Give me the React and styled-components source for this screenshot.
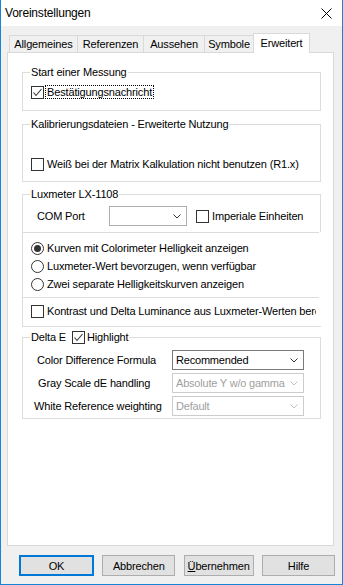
import React from 'react';
import styled, { createGlobalStyle } from 'styled-components';

const GlobalStyle = createGlobalStyle`
  html, body {
    margin: 0;
    padding: 0;
    background: #ffffff;
  }
  body {
    font-family: "Liberation Sans", Arial, sans-serif;
    font-size: 11px;
    letter-spacing: -0.15px;
    color: #000000;
  }
  * {
    box-sizing: border-box;
  }
`;

const Window = styled.div`
  width: 343px;
  height: 585px;
  border: 1px solid #1883d7;
  border-top: none;
  display: flex;
  flex-direction: column;
  background: #ffffff;
`;

const TitleBar = styled.div`
  height: 26px;
  display: flex;
  align-items: center;
  justify-content: space-between;
  padding: 0 10px 0 4px;
  background: #ffffff;
`;

const Title = styled.div`
  font-size: 12px;
  letter-spacing: -0.2px;
`;

const Body = styled.div`
  flex: 1;
  display: flex;
  flex-direction: column;
  background: #f0f0f0;
`;

const TabArea = styled.div`
  flex: 1;
  display: flex;
  flex-direction: column;
  margin: 7px 8px 0 6px;
`;

const TabStrip = styled.div`
  display: flex;
  align-items: flex-end;
  height: 20px;
  margin-bottom: -1px;
  padding-left: 2px;
  position: relative;
  z-index: 1;
`;

const Tab = styled.div`
  width: ${p => p.$w}px;
  height: ${p => (p.$active ? 20 : 17)}px;
  margin-bottom: ${p => (p.$active ? 0 : 1)}px;
  margin-right: -1px;
  border: 1px solid #d9d9d9;
  border-bottom: none;
  background: ${p => (p.$active ? '#ffffff' : '#f0f0f0')};
  display: flex;
  align-items: center;
  justify-content: center;
  padding-bottom: ${p => (p.$active ? 2 : 0)}px;
  position: relative;
  z-index: ${p => (p.$active ? 2 : 1)};
`;

const Panel = styled.div`
  flex: 1;
  background: #ffffff;
  border: 1px solid #d9d9d9;
  padding: 12px 12px 0 14px;
  display: flex;
  flex-direction: column;
  min-height: 0;
`;

const Group = styled.fieldset`
  margin: ${p => p.$mt || 0}px 0 0 0;
  padding: ${p => p.$pt}px 0 ${p => p.$pb}px 0;
  border: 1px solid #dcdcdc;
  min-width: 0;
`;

const Legend = styled.legend`
  margin-left: 7px;
  padding: 0 1px;
  line-height: 14px;
`;

const LegendInner = styled.span`
  display: flex;
  align-items: center;
  height: 14px;
`;

const Row = styled.div`
  display: flex;
  align-items: center;
  height: ${p => p.$h || 16}px;
  padding-left: ${p => (p.$indent !== undefined ? p.$indent : 8)}px;
  margin-top: ${p => p.$mt || 0}px;
  margin-right: ${p => p.$mr || 0}px;
  overflow: hidden;
  white-space: nowrap;
`;

const Box = styled.span`
  width: 13px;
  height: 13px;
  flex-shrink: 0;
  border: 1px solid #333333;
  background: #ffffff;
  display: flex;
  align-items: center;
  justify-content: center;
  margin-left: ${p => p.$ml || 0}px;
`;

const Radio = styled.span`
  width: 13px;
  height: 13px;
  flex-shrink: 0;
  border: 1px solid #333333;
  border-radius: 50%;
  background: #ffffff;
  display: flex;
  align-items: center;
  justify-content: center;

  &::after {
    content: '';
    display: ${p => (p.$on ? 'block' : 'none')};
    width: 7px;
    height: 7px;
    border-radius: 50%;
    background: #333333;
  }
`;

const Caption = styled.span`
  margin-left: 1px;
  padding: 0 1px;
  border: 1px dotted ${p => (p.$focus ? '#000000' : 'transparent')};
  line-height: 12px;
  white-space: nowrap;
`;

const Plain = styled.span`
  margin-left: ${p => p.$ml || 0}px;
  width: ${p => (p.$w ? `${p.$w}px` : 'auto')};
  white-space: nowrap;
  flex-shrink: 0;
`;

const Lower = styled.div`
  margin: 6px -1px 0 0;
  padding-bottom: 7px;
  background: #ffffff;
  position: relative;
`;

const Sep = styled.div`
  border-top: 1px solid #dcdcdc;
  margin-right: 2px;
`;

const RadioList = styled.div`
  padding: 6px 0 4px;
`;

const Combo = styled.div`
  width: ${p => (p.$w ? `${p.$w}px` : '100%')};
  height: 20px;
  flex-shrink: 0;
  border: 1px solid ${p => (p.$disabled ? '#cccccc' : p.$hot ? '#7a7a7a' : '#adadad')};
  background: #ffffff;
  display: flex;
  align-items: center;
  padding-left: 3px;
  color: ${p => (p.$disabled ? '#a0a0a0' : '#000000')};
`;

const ComboText = styled.span`
  flex: 1;
  overflow: hidden;
  white-space: nowrap;
  letter-spacing: -0.2px;
`;

const ComboArrow = styled.span`
  width: 17px;
  flex-shrink: 0;
  display: flex;
  justify-content: flex-end;
  padding-right: 5px;
`;

const DeltaGrid = styled.div`
  display: grid;
  grid-template-columns: 149px 132px;
  grid-auto-rows: 20px;
  row-gap: 3px;
  align-items: center;
`;

const GridLabel = styled.span`
  padding-left: ${p => p.$indent}px;
  white-space: nowrap;
`;

const ButtonRow = styled.div`
  display: flex;
  justify-content: space-between;
  padding: 9px 7px 8px 18px;
`;

const Button = styled.div`
  width: ${p => p.$w}px;
  height: 21px;
  background: #e1e1e1;
  border: ${p => (p.$default ? '2px solid #0078d7' : '1px solid #adadad')};
  display: flex;
  align-items: center;
  justify-content: center;
`;

const Key = styled.span`
  text-decoration: underline;
`;

const Check = () => (
  <svg width="11" height="11" viewBox="0 0 11 11">
    <polyline points="1.5,5.5 4,8.5 9.5,2" fill="none" stroke="#333333" strokeWidth="1.1" />
  </svg>
);

const Chevron = ({ color }) => (
  <svg width="8" height="5" viewBox="0 0 8 5">
    <polyline points="0.5,0.5 4,4 7.5,0.5" fill="none" stroke={color} strokeWidth="1" />
  </svg>
);

const CloseIcon = () => (
  <svg width="11" height="11" viewBox="0 0 11 11">
    <path d="M0.5 0.5 L10.5 10.5 M10.5 0.5 L0.5 10.5" stroke="#000000" strokeWidth="1" />
  </svg>
);

const tabs = [
  { label: 'Allgemeines', w: 69 },
  { label: 'Referenzen', w: 67 },
  { label: 'Aussehen', w: 62 },
  { label: 'Symbole', w: 50 },
  { label: 'Erweitert', w: 57, active: true },
];

const radios = [
  { label: 'Kurven mit Colorimeter Helligkeit anzeigen', on: true },
  { label: 'Luxmeter-Wert bevorzugen, wenn verfügbar' },
  { label: 'Zwei separate Helligkeitskurven anzeigen' },
];

const deltaRows = [
  { label: 'Color Difference Formula', indent: 14, value: 'Recommended', hot: true },
  { label: 'Gray Scale dE handling', indent: 15, value: 'Absolute Y w/o gamma', disabled: true },
  { label: 'White Reference weighting', indent: 11, value: 'Default', disabled: true },
];

export default function App() {
  return (
    <>
      <GlobalStyle />
      <Window>
        <TitleBar>
          <Title>Voreinstellungen</Title>
          <CloseIcon />
        </TitleBar>
        <Body>
          <TabArea>
            <TabStrip>
              {tabs.map(t => (
                <Tab key={t.label} $w={t.w} $active={t.active}>{t.label}</Tab>
              ))}
            </TabStrip>
            <Panel>
              <Group $pt={5} $pb={10}>
                <Legend><LegendInner>Start einer Messung</LegendInner></Legend>
                <Row>
                  <Box><Check /></Box>
                  <Caption $focus>Bestätigungsnachricht</Caption>
                </Row>
              </Group>

              <Group $mt={6} $pt={25} $pb={9}>
                <Legend><LegendInner>Kalibrierungsdateien - Erweiterte Nutzung</LegendInner></Legend>
                <Row>
                  <Box />
                  <Caption>Weiß bei der Matrix Kalkulation nicht benutzen (R1.x)</Caption>
                </Row>
              </Group>

              <Group $mt={5} $pt={5} $pb={0}>
                <Legend><LegendInner>Luxmeter LX-1108</LegendInner></Legend>
                <Row $h={20} $indent={14}>
                  <Plain $w={72}>COM Port</Plain>
                  <Combo $w={78}>
                    <ComboText />
                    <ComboArrow><Chevron color="#333333" /></ComboArrow>
                  </Combo>
                  <Box $ml={9} />
                  <Caption>Imperiale Einheiten</Caption>
                </Row>
                <Lower>
                  <Sep />
                  <RadioList>
                    {radios.map(r => (
                      <Row key={r.label} $h={18}>
                        <Radio $on={r.on} />
                        <Caption>{r.label}</Caption>
                      </Row>
                    ))}
                  </RadioList>
                  <Sep />
                  <Row $mr={5} $mt={5}>
                    <Box />
                    <Caption>Kontrast und Delta Luminance aus Luxmeter-Werten berechnen</Caption>
                  </Row>
                </Lower>
              </Group>

              <Group $mt={3} $pt={6} $pb={2}>
                <Legend>
                  <LegendInner>
                    Delta E
                    <Box $ml={6}><Check /></Box>
                    <Plain $ml={2}>Highlight</Plain>
                  </LegendInner>
                </Legend>
                <DeltaGrid>
                  {deltaRows.map(r => (
                    <React.Fragment key={r.label}>
                      <GridLabel $indent={r.indent}>{r.label}</GridLabel>
                      <Combo $disabled={r.disabled} $hot={r.hot}>
                        <ComboText>{r.value}</ComboText>
                        <ComboArrow>
                          <Chevron color={r.disabled ? '#c2c2c2' : '#333333'} />
                        </ComboArrow>
                      </Combo>
                    </React.Fragment>
                  ))}
                </DeltaGrid>
              </Group>
            </Panel>
          </TabArea>
          <ButtonRow>
            <Button $w={75} $default>OK</Button>
            <Button $w={73}>Abbrechen</Button>
            <Button $w={70}><Key>Ü</Key>bernehmen</Button>
            <Button $w={73}>Hilfe</Button>
          </ButtonRow>
        </Body>
      </Window>
    </>
  );
}
